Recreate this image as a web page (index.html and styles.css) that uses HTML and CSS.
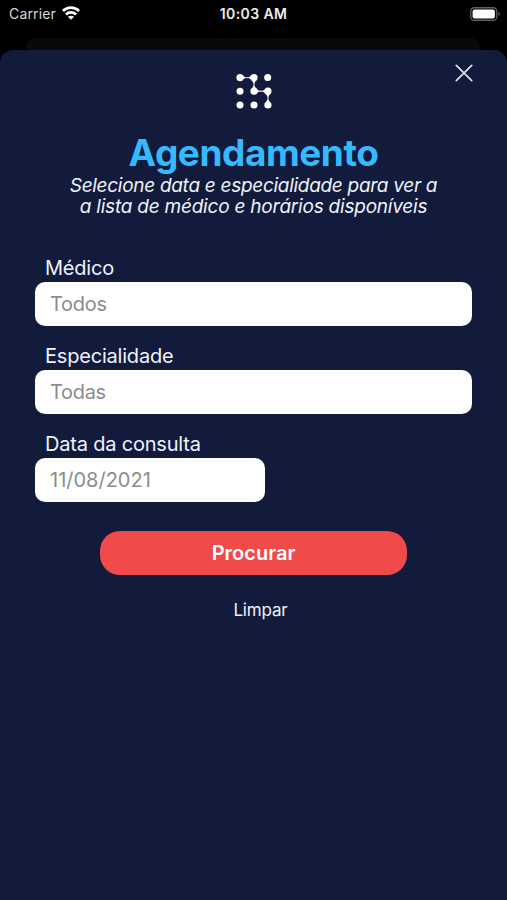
FILE: index.html
```html
<!DOCTYPE html>
<html lang="pt-BR">
<head>
<meta charset="utf-8">
<title>Agendamento</title>
<link rel="stylesheet" href="styles.css">
</head>
<body>
<header class="status">
  <div class="carrier"><span class="carrier-name">Carrier</span>
    <svg class="wifi" width="18" height="14" viewBox="0 0 18 14" fill="none" stroke="#fff" stroke-width="2.7"><path d="M.9 5C5.400 .6 12.600 .6 17.100 5"/><path d="M3.900 8.400c2.900-2.600 7.300-2.600 10.200 0"/><path d="M9 13.800 5.900 10.800c1.700-1.500 4.500-1.500 6.200 0z" fill="#fff" stroke="none"/></svg>
  </div>
  <span class="clock">10:03 AM</span>
  <svg class="battery" width="31" height="14" viewBox="0 0 31 14"><rect x=".75" y=".75" width="26" height="12.500" rx="3.600" fill="none" stroke="#606062" stroke-width="1.300"/><rect x="2.600" y="2.500" width="22.300" height="9" rx="2" fill="#fff"/><path d="M28.300 5v4c2-.8 2-3.200 0-4z" fill="#606062"/></svg>
</header>
<div class="behind"></div>
<main class="sheet">
  <button class="close" aria-label="Fechar"><svg width="18" height="18" viewBox="0 0 18 18" stroke="#dce1ee" stroke-width="1.7" stroke-linecap="round"><path d="M1.300 1.300 16.700 16.700M16.700 1.300 1.300 16.700"/></svg></button>
  <svg class="logo" width="36" height="36" viewBox="0 0 36 36"><path d="M4 4.600H18V18.200H32V32" fill="none" stroke="#b9bfd0" stroke-width="1.400"/><g fill="#fff"><path d="M6 1.800 9.500 4.600 6 7.400zM16 1.800 12.500 4.600 16 7.400zM15.500 7 18 10.500 20.500 7zM15.500 16 18 12.500 20.500 16zM20 15.700 23.500 18.200 20 20.700zM30 15.700 26.500 18.200 30 20.700zM29.400 20.500 31.900 24 34.400 20.500zM29.400 29.800 31.900 26.300 34.400 29.800z"/><circle cx="4" cy="4.600" r="3.600"/><circle cx="18" cy="4.600" r="3.600"/><circle cx="31.700" cy="4.600" r="3.500"/><circle cx="4" cy="18.200" r="3.500"/><circle cx="18" cy="18.200" r="3.600"/><circle cx="31.900" cy="18.200" r="3.600"/><circle cx="4" cy="32" r="3.500"/><circle cx="18" cy="32" r="3.500"/><circle cx="31.900" cy="32" r="3.600"/></g></svg>
  <h1 class="title">Agendamento</h1>
  <p class="intro"><span class="line first">Selecione data e especialidade para ver a</span><span class="line second">a lista de médico e horários disponíveis</span></p>
  <form class="form">
    <div class="field"><span class="label">Médico</span><div class="input">Todos</div></div>
    <div class="field"><span class="label">Especialidade</span><div class="input">Todas</div></div>
    <div class="field"><span class="label">Data da consulta</span><div class="input date">11/08/2021</div></div>
  </form>
  <button class="search">Procurar</button>
  <button class="clear">Limpar</button>
</main>
</body>
</html>
```
FILE: styles.css
```css
* { box-sizing: border-box; }
body {
  margin: 0;
  height: 900px;
  overflow: hidden;
  background: #000;
  color: #eef2fb;
  font-family: Inter, "Liberation Sans", sans-serif;
}
button {
  display: block;
  border: 0;
  padding: 0;
  background: none;
  color: inherit;
  font-family: inherit;
}
.status {
  display: grid;
  grid-template-columns: 1fr auto 1fr;
  align-items: center;
  height: 38px;
  padding: 0 6px 11px;
}
.carrier { display: flex; align-items: center; gap: 6px; padding-left: 3px; }
.carrier-name { font-size: 14px; line-height: 18px; letter-spacing: .15px; color: #d8d8d8; }
.wifi { margin-top: -1px; }
.clock {
  font-size: 14px;
  line-height: 18px;
  font-weight: 600;
  letter-spacing: .4px;
  color: #eee;
}
.battery { justify-self: end; }
.behind {
  height: 12px;
  margin: 0 26px;
  border-radius: 10px 10px 0 0;
  background: #09090a;
}
.sheet {
  position: relative;
  height: 850px;
  padding: 23px 35px 0;
  border-radius: 13px 13px 0 0;
  background: #131b3c;
}
.close { position: absolute; top: 14px; right: 34px; width: 18px; height: 18px; }
.close svg, .logo { display: block; }
.logo { margin: 0 auto; }
.title {
  margin: 22px 0 0;
  height: 44px;
  line-height: 44px;
  font-size: 37px;
  font-weight: 700;
  letter-spacing: -.45px;
  text-align: center;
  color: #36b9ff;
}
.intro {
  margin: 0;
  font-size: 19px;
  line-height: 21px;
  font-style: italic;
  text-align: center;
}
.line { display: block; white-space: nowrap; }
.first { letter-spacing: -.29px; }
.second { letter-spacing: -.22px; }
.form { margin-top: 37px; }
.field { height: 88px; }
.label {
  display: block;
  height: 28px;
  padding-left: 10px;
  font-size: 20px;
  line-height: 28px;
  letter-spacing: -.2px;
}
.input {
  height: 44px;
  padding-left: 15px;
  border-radius: 10px;
  background: #fff;
  color: #8c8c8e;
  font-size: 20px;
  line-height: 44px;
  letter-spacing: -.3px;
}
.date { width: 230px; letter-spacing: 0; }
.search {
  width: 307px;
  height: 44px;
  margin: 13px auto 0;
  border-radius: 20px;
  background: #f04a4a;
  color: #fff;
  font-size: 20px;
  font-weight: 600;
  line-height: 44px;
}
.clear {
  margin: 23px auto 0;
  padding-left: 14px;
  font-size: 17px;
  line-height: 24px;
  letter-spacing: -.15px;
}
```
